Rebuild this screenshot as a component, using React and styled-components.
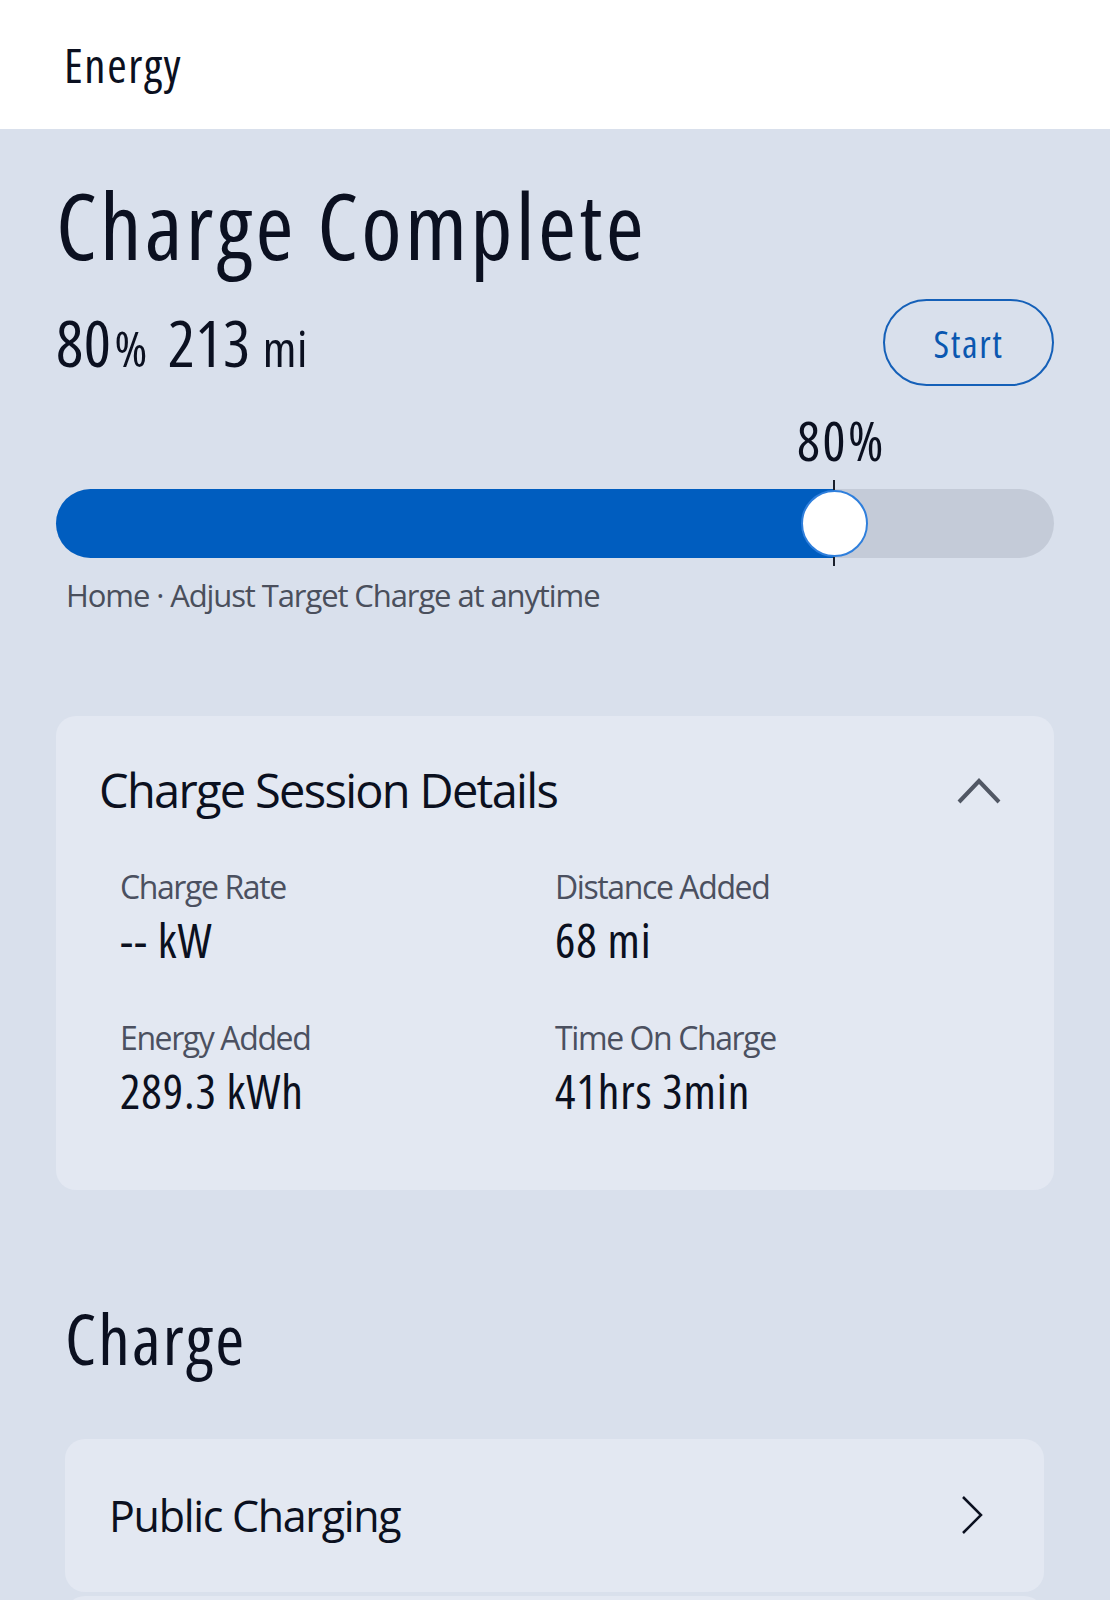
import React from "react"
import styled, { createGlobalStyle } from "styled-components"

const GlobalStyle = createGlobalStyle`
  body {
    margin: 0;
    background: #d9e0ec;
    font-family: "Open Sans", "Noto Sans", sans-serif;
    font-stretch: 75%;
    color: #0b1020;
  }
  * { box-sizing: border-box; }
`

const TARGET = 80

export default function App() {
  const thumb = 67
  const trackWidth = 998
  const center = thumb / 2 + (trackWidth - thumb) * (TARGET / 100)

  return (
    <>
      <GlobalStyle />
      <Page>
        <Header>
          <h1>Energy</h1>
        </Header>

        <Main>
          <Title>Charge Complete</Title>

          <StatusRow>
            <Range>
              <span>80<Unit>%</Unit></span>
              <span>213<Unit $spaced>mi</Unit></span>
            </Range>
            <StartButton type="button">Start</StartButton>
          </StatusRow>

          <Slider>
            <TargetLabel style={{ left: center }}>{TARGET}%</TargetLabel>
            <Track>
              <Fill style={{ width: center }} />
              <Tick style={{ left: center }} />
              <Thumb style={{ left: center }} />
            </Track>
          </Slider>
          <Hint>Home · Adjust Target Charge at anytime</Hint>

          <Card>
            <CardHead>
              <h2>Charge Session Details</h2>
              <svg width="46" height="30" viewBox="0 0 46 30" fill="none">
                <path d="M3 27 L23 6 L43 27" stroke="#515764" strokeWidth="4" />
              </svg>
            </CardHead>
            <Details>
              <Stat>
                <label>Charge Rate</label>
                <strong>-- kW</strong>
              </Stat>
              <Stat>
                <label>Distance Added</label>
                <strong>68 mi</strong>
              </Stat>
              <Stat>
                <label>Energy Added</label>
                <strong>289.3 kWh</strong>
              </Stat>
              <Stat>
                <label>Time On Charge</label>
                <strong>41hrs 3min</strong>
              </Stat>
            </Details>
          </Card>

          <Section>Charge</Section>
          <List>
            <Row>
              <span>Public Charging</span>
              <svg width="24" height="40" viewBox="0 0 24 40" fill="none">
                <path d="M3 2 L21 20 L3 38" stroke="#0b1020" strokeWidth="2.5" />
              </svg>
            </Row>
            <Row />
          </List>
        </Main>
      </Page>
    </>
  )
}

const Page = styled.div`
  height: 1600px;
  overflow: hidden;
`

const Header = styled.header`
  height: 129px;
  background: #ffffff;
  display: flex;
  align-items: center;
  padding-left: 64px;
  h1 {
    margin: 0;
    font-size: 47px;
    font-weight: 400;
    letter-spacing: 1.6px;
  }
`

const Main = styled.main`
  padding: 0 56px;
`

const Title = styled.h2`
  margin: 41px 0 0;
  font-size: 92px;
  font-weight: 500;
  line-height: 1.2;
  letter-spacing: 3.3px;
`

const StatusRow = styled.div`
  display: flex;
  justify-content: space-between;
  align-items: center;
  margin-top: 19px;
`

const Range = styled.div`
  display: flex;
  align-items: baseline;
  gap: 20px;
  font-size: 64px;
  font-weight: 400;
  letter-spacing: 0.5px;
`

const Unit = styled.small`
  font-size: 50px;
  margin-left: ${(p) => (p.$spaced ? "12px" : "3px")};
`

const StartButton = styled.button`
  width: 171px;
  height: 87px;
  border: 2.5px solid #1560b8;
  border-radius: 44px;
  background: transparent;
  color: #0a57b0;
  font-family: inherit;
  font-stretch: 75%;
  font-size: 38px;
  font-weight: 400;
  letter-spacing: 1.6px;
  cursor: pointer;
`

const Slider = styled.div`
  position: relative;
  margin-top: 27px;
  padding-top: 76px;
`

const TargetLabel = styled.div`
  position: absolute;
  top: 0;
  transform: translateX(-42%);
  font-size: 54px;
  line-height: 1;
  letter-spacing: 2.5px;
`

const Track = styled.div`
  position: relative;
  height: 69px;
  border-radius: 35px;
  background: #c4cbd8;
`

const Fill = styled.div`
  height: 100%;
  border-radius: 35px 0 0 35px;
  background: #005dbf;
`

const Tick = styled.div`
  position: absolute;
  top: -9px;
  bottom: -8px;
  width: 2px;
  margin-left: -1px;
  background: #1a1f2b;
`

const Thumb = styled.div`
  position: absolute;
  top: 1px;
  width: 67px;
  height: 67px;
  margin-left: -33.5px;
  border-radius: 50%;
  background: #ffffff;
  border: 2.5px solid #2f7fdc;
`

const Hint = styled.p`
  margin: 16px 0 0 10px;
  font-size: 31px;
  font-stretch: 100%;
  letter-spacing: -1.1px;
  color: #4a4f5c;
`

const Card = styled.section`
  margin-top: 100px;
  background: #e3e8f2;
  border-radius: 20px;
  padding: 42px 52px 72px 43px;
`

const CardHead = styled.div`
  display: flex;
  justify-content: space-between;
  align-items: center;
  h2 {
    margin: 0;
    font-size: 47px;
    font-weight: 400;
    font-stretch: 100%;
    letter-spacing: -1.7px;
  }
`

const Details = styled.div`
  display: grid;
  grid-template-columns: 435px 1fr;
  row-gap: 49px;
  margin-top: 43px;
  padding-left: 21px;
`

const Stat = styled.div`
  display: flex;
  flex-direction: column;
  label {
    font-size: 32px;
    font-stretch: 100%;
    letter-spacing: -1.4px;
    color: #4b5060;
  }
  strong {
    margin-top: 6px;
    font-size: 48px;
    font-weight: 400;
    letter-spacing: 0.9px;
    line-height: 1.1;
  }
`

const Section = styled.h2`
  margin: 100px 0 0 9px;
  font-size: 70px;
  font-weight: 500;
  letter-spacing: 2.2px;
`

const List = styled.div`
  display: flex;
  flex-direction: column;
  gap: 4px;
  margin: 53px 10px 0 9px;
`

const Row = styled.div`
  height: 153px;
  flex-shrink: 0;
  display: flex;
  justify-content: space-between;
  align-items: center;
  padding: 0 60px 0 44px;
  background: #e3e8f2;
  border-radius: 20px;
  span {
    font-size: 43px;
    font-stretch: 100%;
    letter-spacing: -1.3px;
  }
`
